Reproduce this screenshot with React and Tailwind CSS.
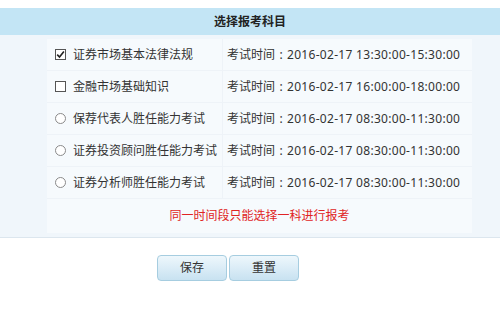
import React from "react";

const rows = [
  { type: "checkbox", checked: true, name: "证券市场基本法律法规", time: "2016-02-17 13:30:00-15:30:00" },
  { type: "checkbox", checked: false, name: "金融市场基础知识", time: "2016-02-17 16:00:00-18:00:00" },
  { type: "radio", name: "保荐代表人胜任能力考试", time: "2016-02-17 08:30:00-11:30:00" },
  { type: "radio", name: "证券投资顾问胜任能力考试", time: "2016-02-17 08:30:00-11:30:00" },
  { type: "radio", name: "证券分析师胜任能力考试", time: "2016-02-17 08:30:00-11:30:00" },
];

function Box({ type, checked }) {
  if (type === "radio") {
    return <span className="w-[11px] h-[11px] rounded-full border border-[#8a8a8a] bg-white shrink-0" />;
  }
  return (
    <span className="w-[11px] h-[11px] border border-[#555] bg-white shrink-0 flex items-center justify-center">
      {checked && (
        <svg width="9" height="9" viewBox="0 0 9 9">
          <path d="M1.2 4.6 L3.5 7 L7.9 1.4" fill="none" stroke="#222" strokeWidth="1.6" />
        </svg>
      )}
    </span>
  );
}

export default function App() {
  return (
    <div
      className="w-[500px] h-[319px] bg-white text-[12px] text-[#333] overflow-hidden"
      style={{ fontFamily: '"Noto Sans", "Noto Sans CJK SC", sans-serif' }}
    >
      <div className="h-[8px]" />
      <div className="h-[27px] bg-[#c3e5f5] flex items-center justify-center font-bold text-[#222] pt-[1px]">
        选择报考科目
      </div>
      <div className="bg-[#f0f6fb] border-b border-[#dce6ee] pt-[4px] pb-[4px] pl-[47px]">
        <div className="w-[425px] bg-[#f6fafd]">
          {rows.map((r, i) => (
            <div key={i} className="flex h-[32px] border-b border-[#eef3f8]">
              <div className="w-[176px] flex items-center pl-[8px] gap-[7px] border-r border-[#eef3f8]">
                <Box type={r.type} checked={r.checked} />
                <span className="whitespace-nowrap">{r.name}</span>
              </div>
              <div className="flex-1 flex items-center pl-[4px] whitespace-nowrap">
                <span>考试时间</span>
                <span className="inline-block w-[12px] text-center">:</span>
                <span className="tracking-[0.3px]">{r.time}</span>
              </div>
            </div>
          ))}
          <div className="h-[34px] flex items-center justify-center text-[#e02424]">
            同一时间段只能选择一科进行报考
          </div>
        </div>
      </div>
      <div className="flex gap-[2px] pl-[157px] pt-[17px]">
        {["保存", "重置"].map((t) => (
          <button
            key={t}
            className="w-[70px] h-[26px] rounded-[4px] border border-[#a6cde0] bg-gradient-to-b from-[#eef7fc] to-[#c8e2f1] text-[#333] text-[12px] flex items-center justify-center"
          >
            {t}
          </button>
        ))}
      </div>
    </div>
  );
}
